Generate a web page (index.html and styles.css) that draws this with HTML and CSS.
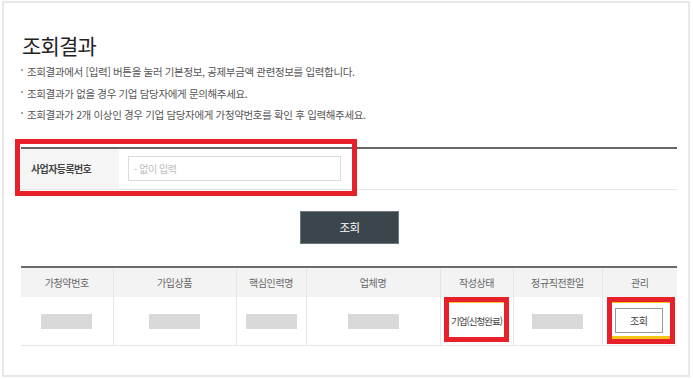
FILE: index.html
```html
<!DOCTYPE html>
<html lang="ko">
<head>
<meta charset="utf-8">
<title>조회결과</title>
<link rel="stylesheet" href="styles.css">
</head>
<body>
<div class="frame">
  <h1 class="title">조회결과</h1>
  <ul class="notes">
    <li>조회결과에서 [입력] 버튼을 눌러 기본정보, 공제부금액 관련정보를 입력합니다.</li>
    <li>조회결과가 없을 경우 기업 담당자에게 문의해주세요.</li>
    <li>조회결과가 2개 이상인 경우 기업 담당자에게 가청약번호를 확인 후 입력해주세요.</li>
  </ul>
  <div class="search">
    <div class="search-label">사업자등록번호</div>
    <div class="search-field"><input class="search-input" type="text" placeholder="- 없이 입력"></div>
    <div class="mark mark-search"></div>
  </div>
  <div class="btn-row"><button class="btn-primary" type="button">조회</button></div>
  <table class="result">
    <colgroup>
      <col style="width:92px"><col style="width:123px"><col style="width:70px"><col style="width:134px"><col style="width:73px"><col style="width:89px"><col style="width:75px">
    </colgroup>
    <thead>
      <tr><th>가청약번호</th><th>가입상품</th><th>핵심인력명</th><th>업체명</th><th>작성상태</th><th>정규직전환일</th><th>관리</th></tr>
    </thead>
    <tbody>
      <tr>
        <td><span class="blur"></span></td>
        <td><span class="blur"></span></td>
        <td><span class="blur"></span></td>
        <td><span class="blur"></span></td>
        <td class="cell-mark"><span class="status">기업(신청완료)</span><div class="mark mark-status"></div></td>
        <td><span class="blur"></span></td>
        <td class="cell-mark"><button class="btn-small" type="button">조회</button><div class="mark mark-manage"><div class="hl"></div></div></td>
      </tr>
    </tbody>
  </table>
</div>
</body>
</html>
```
FILE: styles.css
```css
* { box-sizing: border-box; }
html, body { margin: 0; padding: 0; background: #fff; }
body {
  font-family: "Noto Sans CJK KR", "Noto Sans", sans-serif;
  color: #333;
  width: 693px;
  height: 379px;
  overflow: hidden;
}
.frame {
  position: relative;
  margin: 1px 3px 0 2px;
  height: 376px;
  border: 2px solid #e8e8e8;
  padding: 0 11px 0 17px;
}
.title {
  margin: 28px 0 0 1px;
  font-size: 21px;
  line-height: 28px;
  font-weight: 400;
  letter-spacing: -0.8px;
  color: #222;
}
.notes {
  list-style: none;
  margin: 2px 0 0 0;
  padding: 0;
}
.notes li {
  position: relative;
  padding-left: 6px;
  font-size: 10.5px;
  line-height: 21.5px;
  letter-spacing: -0.35px;
  color: #555;
}
.notes li::before {
  content: "";
  position: absolute;
  left: 0;
  top: 8px;
  width: 2px;
  height: 2px;
  background: #aaa;
}
.search {
  position: relative;
  margin-top: 21px;
  display: flex;
  height: 43px;
  border-top: 2px solid #666;
  border-bottom: 1px solid #e6e6e6;
}
.search-label {
  width: 98px;
  background: #f5f5f5;
  padding-left: 10px;
  display: flex;
  align-items: center;
  font-size: 10px;
  font-weight: 700;
  letter-spacing: -0.6px;
  color: #444;
}
.search-field {
  padding-left: 9px;
  display: flex;
  align-items: center;
}
.search-input {
  width: 213px;
  height: 25px;
  margin: 0;
  border: 1px solid #dcdcdc;
  padding: 0 0 0 5px;
  font-family: inherit;
  font-size: 10px;
  letter-spacing: -0.5px;
  outline: none;
}
.search-input::placeholder { color: #bbb; }
.btn-row {
  margin-top: 21px;
  display: flex;
  justify-content: center;
}
.btn-primary {
  width: 99px;
  height: 33px;
  margin: 0 0 0 1px;
  background: #3a464b;
  border: 1px solid #6e777b;
  color: #fff;
  font-family: inherit;
  font-size: 11.5px;
  letter-spacing: -0.5px;
  padding: 0;
}
.result {
  margin-top: 22px;
  width: 656px;
  border-collapse: collapse;
  table-layout: fixed;
  border-top: 2px solid #6b6b6b;
}
.result th {
  height: 30px;
  padding: 0;
  background: #f3f3f3;
  font-size: 10px;
  font-weight: 400;
  letter-spacing: -0.4px;
  color: #666;
  border-left: 1px solid #e6e6e6;
}
.result td {
  height: 49px;
  padding: 0;
  text-align: center;
  font-size: 10px;
  letter-spacing: -0.6px;
  color: #555;
  border-left: 1px solid #e6e6e6;
  border-bottom: 1px solid #e6e6e6;
}
.result th:first-child, .result td:first-child { border-left: 0; }
.blur {
  display: inline-block;
  vertical-align: middle;
  width: 51px;
  height: 15px;
  background: #d9d9d9;
}
.status {
  font-size: 9.5px;
  letter-spacing: -1px;
  color: #444;
}
.cell-mark { position: relative; }
.btn-small {
  width: 48px;
  height: 25px;
  margin: 0 0 0 -2px;
  padding: 0;
  background: #fff;
  border: 1px solid #999;
  font-family: inherit;
  font-size: 10px;
  letter-spacing: -0.5px;
  color: #444;
}
.mark {
  position: absolute;
  border: 5px solid #e8202a;
  pointer-events: none;
}
.mark-search { left: -6px; top: -10px; width: 342px; height: 57px; }
.mark-status { left: 3px; top: 0; width: 65px; height: 45px; }
.mark-status::before {
  content: "";
  position: absolute;
  left: 0; right: 0; top: 0;
  height: 1px;
  background: #f8c23a;
}
.mark-manage { left: 4px; top: 0; width: 68px; height: 47px; }
.hl {
  position: absolute;
  left: 0; right: 0; top: 0; bottom: 0;
  border-top: 1px solid #f5c518;
  border-bottom: 3px solid #f5c518;
}
```
